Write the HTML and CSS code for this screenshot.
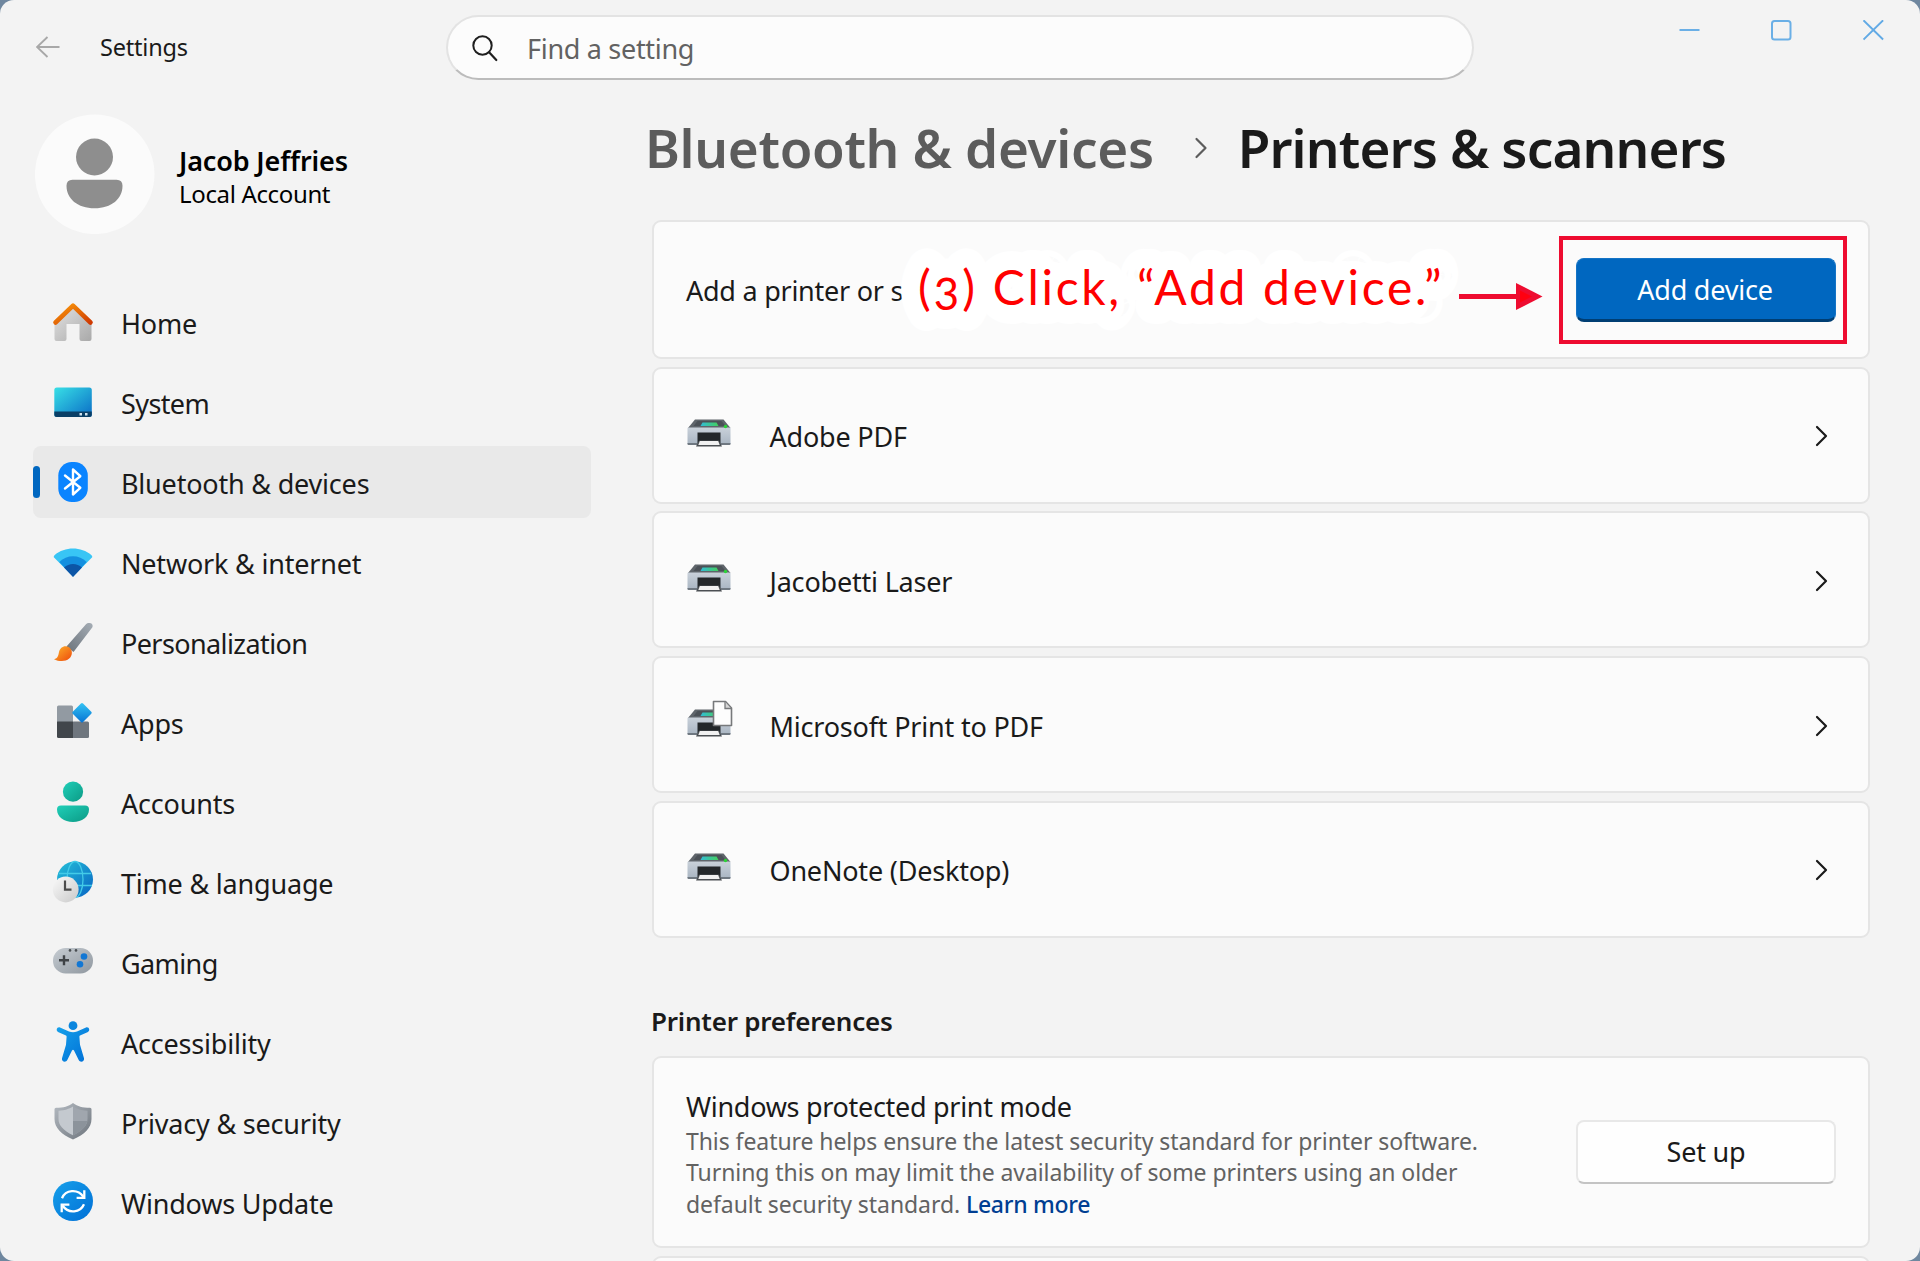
FILE: index.html
```
<!DOCTYPE html>
<html lang="en">
<head>
    <meta charset="UTF-8">
    <meta name="viewport" content="width=device-width, initial-scale=1.0">
    <title>Settings</title>
    <link rel="stylesheet" href="styles.css">
</head>
<body>
    <!-- shared gradients and symbols -->
    <svg class="defs" width="0" height="0">
        <defs>
            <linearGradient id="roof" x1="0" y1="0" x2="1" y2="1"><stop offset="0" stop-color="#fb9a0a"/><stop offset="1" stop-color="#cf3a02"/></linearGradient>
            <linearGradient id="wall" x1="0" y1="0" x2="1" y2="1"><stop offset="0" stop-color="#e2e2e2"/><stop offset="1" stop-color="#a9a9a9"/></linearGradient>
            <linearGradient id="screen" x1="0" y1="0" x2="1" y2="1"><stop offset="0" stop-color="#38e0e6"/><stop offset="1" stop-color="#0a6cc6"/></linearGradient>
            <linearGradient id="handle" x1="1" y1="0" x2="0" y2="1"><stop offset="0" stop-color="#a5adb5"/><stop offset="1" stop-color="#6b737b"/></linearGradient>
            <linearGradient id="bristle" x1="0" y1="0" x2="1" y2="1"><stop offset="0" stop-color="#fdb52a"/><stop offset="1" stop-color="#ee4a0c"/></linearGradient>
            <linearGradient id="diamond" x1="0" y1="0" x2="1" y2="1"><stop offset="0" stop-color="#35c5f4"/><stop offset="1" stop-color="#0672d3"/></linearGradient>
            <linearGradient id="teal" x1="0" y1="0" x2="1" y2="1"><stop offset="0" stop-color="#20cfb8"/><stop offset="1" stop-color="#0b9a85"/></linearGradient>
            <linearGradient id="globe" x1="0" y1="0" x2="1" y2="1"><stop offset="0" stop-color="#25c0d8"/><stop offset="1" stop-color="#0864c4"/></linearGradient>
            <linearGradient id="clock" x1="0" y1="0" x2="1" y2="1"><stop offset="0" stop-color="#fafafa"/><stop offset="1" stop-color="#c9c9c9"/></linearGradient>
            <linearGradient id="pad" x1="0" y1="0" x2="1" y2="1"><stop offset="0" stop-color="#c6ccd2"/><stop offset="1" stop-color="#8f979f"/></linearGradient>
            <linearGradient id="blue" x1="0" y1="0" x2="1" y2="1"><stop offset="0" stop-color="#16a0ea"/><stop offset="1" stop-color="#006fd6"/></linearGradient>
            <linearGradient id="shield" x1="0" y1="0" x2="1" y2="1"><stop offset="0" stop-color="#b4bac1"/><stop offset="1" stop-color="#6e757d"/></linearGradient>
            <linearGradient id="body" x1="0" y1="0" x2="0" y2="1"><stop offset="0" stop-color="#c9d1da"/><stop offset="1" stop-color="#a9b5c2"/></linearGradient>
            <linearGradient id="lcd" x1="0" y1="0" x2="1" y2="0"><stop offset="0" stop-color="#33bcd6"/><stop offset="1" stop-color="#43cf5d"/></linearGradient>
            <symbol id="printer" viewBox="0 0 44 28">
                <path d="M8 .5h28.500l7 8.500H1z" fill="#5f656b"/>
                <path d="M10.500 2h24l4 5H6.500z" fill="#4b5157"/>
                <path d="M15.500 3.500h14l2 3.500h-18z" fill="url(#lcd)"/>
                <rect x=".5" y="8.500" width="43" height="17" rx="1" fill="url(#body)"/>
                <path d="M.5 24h43v1q0 1-1 1h-41q-1 0-1-1z" fill="#6f7881"/>
                <rect x="10.500" y="13.500" width="23" height="10.500" fill="#23272a"/>
                <path d="M12 21.500h20l3 6H9z" fill="#4b4f53"/>
                <path d="M12.800 22h18.400l1.500 4h-21.400z" fill="#f1f1f1"/>
                <circle cx="38.500" cy="7.500" r="1.700" fill="#2bd536"/>
            </symbol>
            <symbol id="chevron" viewBox="0 0 14 22">
                <path d="M2 2l9 9-9 9" fill="none" stroke="currentColor" stroke-width="2.200" stroke-linecap="round" stroke-linejoin="round"/>
            </symbol>
        </defs>
    </svg>

    <div class="window">
        <header class="titlebar">
            <div class="titlebar-left">
                <svg class="back" width="24" height="22" viewBox="0 0 24 22"><path d="M23.500 11H1M11.500 1L1 11l10.500 10" fill="none" stroke="#a8a8a8" stroke-width="1.900"/></svg>
                <span class="app-name">Settings</span>
            </div>
            <div class="search">
                <svg width="28" height="28" viewBox="0 0 28 28"><circle cx="11.500" cy="11.500" r="9.200" fill="none" stroke="#1f1f1f" stroke-width="2"/><path d="M18.100 18.300l7.200 7.700" stroke="#1f1f1f" stroke-width="2.200" stroke-linecap="round"/></svg>
                <span class="search-text">Find a setting</span>
            </div>
            <div class="controls">
                <svg width="21" height="21" viewBox="0 0 21 21"><path d="M.5 10h20" stroke="#6aafe6" stroke-width="2"/></svg>
                <svg width="21" height="21" viewBox="0 0 21 21"><rect x="1" y="1" width="18.500" height="18.500" rx="2.500" fill="none" stroke="#6aafe6" stroke-width="2"/></svg>
                <svg width="21" height="21" viewBox="0 0 21 21"><path d="M.5.300l19.600 19.200M20.100.300L.500 19.500" stroke="#62aae5" stroke-width="1.900"/></svg>
            </div>
        </header>

        <div class="layout">
            <aside class="sidebar">
                <div class="profile">
                    <svg width="120" height="120" viewBox="0 0 120 120">
                        <circle cx="59.700" cy="60.300" r="59.800" fill="#fbfbfb"/>
                        <circle cx="59.500" cy="43" r="18.500" fill="#8e8e8e"/>
                        <path d="M37.500 65.800h44q6 0 6 6c0 13-11 22.500-28 22.500s-28-9.500-28-22.500q0-6 6-6z" fill="#8e8e8e"/>
                    </svg>
                    <div class="profile-text">
                        <div class="profile-name">Jacob Jeffries</div>
                        <div class="profile-type">Local Account</div>
                    </div>
                </div>

                <nav class="nav">
                    <a class="nav-item">
                        <svg class="nav-icon" viewBox="0 0 40 40"><path d="M20 5L1.500 20v17q0 2 2 2h8q2 0 2-2V22h13v15q0 2 2 2h8q2 0 2-2V20z" fill="url(#wall)"/><path d="M2.500 20.500L20 3.700l17.500 16.800" fill="none" stroke="url(#roof)" stroke-width="4.600" stroke-linecap="round" stroke-linejoin="round"/></svg>
                        <span>Home</span>
                    </a>
                    <a class="nav-item">
                        <svg class="nav-icon" viewBox="0 0 40 40"><rect x="1.300" y="5.500" width="37.500" height="29.500" rx="2.500" fill="url(#screen)"/><path d="M1.300 29.500h37.500v3q0 2.500-2.500 2.500H3.800q-2.500 0-2.500-2.500z" fill="#0a3f66"/><rect x="26.500" y="31" width="2.500" height="2.500" fill="#cfe3f0"/><rect x="32" y="31" width="2.500" height="2.500" fill="#cfe3f0"/></svg>
                        <span class="tight">System</span>
                    </a>
                    <a class="nav-item active">
                        <svg class="nav-icon" viewBox="0 0 40 40"><rect x="5.300" width="29.500" height="40" rx="13.500" fill="#0a84ff"/><path d="M12 13.500l15.300 12.300-7.300 6.700v-25l7.300 6.700L12 26.500" fill="none" stroke="#fff" stroke-width="2.400" stroke-linejoin="round" stroke-linecap="round"/></svg>
                        <span>Bluetooth &amp; devices</span>
                    </a>
                    <a class="nav-item">
                        <svg class="nav-icon" viewBox="0 0 40 40"><path d="M20 34.500L.8 15.200Q.5 14 1.500 13.200C12 4.300 28 4.300 38.500 13.200q1 .8.700 2z" fill="#38c5f5"/><path d="M20 34.500L6.300 20C14 12.300 26 12.300 33.700 20z" fill="#148fdf"/><path d="M20 35L11 25.500c5-4.700 13-4.700 18 0z" fill="#0c55a6"/></svg>
                        <span>Network &amp; internet</span>
                    </a>
                    <a class="nav-item">
                        <svg class="nav-icon" viewBox="0 0 40 40"><path d="M13.500 24.500L33 2.200C35-.2 41 .8 39.400 5.200L20.500 30z" fill="url(#handle)"/><path d="M1 37.200c4-1 4.300-3.700 5-7.200 1-5 6-7.500 10-4.700 4.200 3 3.500 8.500.2 11.300C12 40.200 5.500 39.500 1 37.200z" fill="url(#bristle)"/></svg>
                        <span class="tight">Personalization</span>
                    </a>
                    <a class="nav-item">
                        <svg class="nav-icon" viewBox="0 0 40 40"><rect x="4" y="3.500" width="16" height="17" rx="1.500" fill="#929aa2"/><rect x="19" y="19.500" width="17" height="16.500" rx="1.500" fill="#6f767e"/><path d="M4 19.500h16V36H5.500Q4 36 4 34.500z" fill="#41464b"/><rect x="21.700" y="3.500" width="14.600" height="14.600" rx="1.500" transform="rotate(45 29 10.800)" fill="url(#diamond)"/></svg>
                        <span>Apps</span>
                    </a>
                    <a class="nav-item">
                        <svg class="nav-icon" viewBox="0 0 40 40"><circle cx="20" cy="9.700" r="10.100" fill="url(#teal)"/><path d="M8 23.500h24q4 0 4 4C36 35 29 40 20 40S4 35 4 27.500q0-4 4-4z" fill="url(#teal)"/></svg>
                        <span>Accounts</span>
                    </a>
                    <a class="nav-item">
                        <svg class="nav-icon" viewBox="0 0 40 40"><circle cx="22" cy="17.500" r="18" fill="url(#globe)"/><g fill="none" stroke="#43cbe8" stroke-width="1.300"><ellipse cx="22" cy="17.500" rx="8" ry="18"/><path d="M6 11.500h32M5 23.500h34"/></g><circle cx="12.700" cy="27.500" r="12.900" fill="url(#clock)"/><path d="M12 18.500v9.200h6.500" fill="none" stroke="#4c4c4c" stroke-width="2.200"/></svg>
                        <span>Time &amp; language</span>
                    </a>
                    <a class="nav-item">
                        <svg class="nav-icon" viewBox="0 0 40 40"><rect x="0" y="6" width="40" height="25.500" rx="12.500" fill="url(#pad)"/><path d="M11 13.300v10M6 18.300h10" stroke="#3f4347" stroke-width="2.400"/><circle cx="31" cy="14.500" r="3.300" fill="#1277d4"/><circle cx="27" cy="22.300" r="3.300" fill="#1277d4"/><circle cx="17" cy="8.400" r="1.300" fill="#4a4e52"/><circle cx="23" cy="8.400" r="1.300" fill="#4a4e52"/></svg>
                        <span class="tight">Gaming</span>
                    </a>
                    <a class="nav-item">
                        <svg class="nav-icon" viewBox="0 0 40 40"><circle cx="20" cy="3.700" r="4.400" fill="#0b86de"/><path d="M7 5.500l9 4q4 1.500 8 0l9-4c3.300-1 4.300 3.200 2 4.400l-8 3.600q-.7.300-.6 1.200l.6 8 4 13.500c.7 3.500-3.800 4.700-5.300 1.800L21 28.500q-1-1.500-2 0L14.300 38c-1.500 2.900-6 1.700-5.300-1.800l4-13.500.6-8q.100-.9-.6-1.200L5 9.900c-2.300-1.200-1.300-5.400 2-4.400z" fill="url(#blue)"/></svg>
                        <span>Accessibility</span>
                    </a>
                    <a class="nav-item">
                        <svg class="nav-icon" viewBox="0 0 40 40"><path d="M20 1c5 3.500 9 4.800 17 4.800q1.500 0 1.500 1.500V17c0 9-7 15.500-18.500 20.500C8.500 32.500 1.500 26 1.500 17V7.300q0-1.500 1.500-1.500C11 5.800 15 4.500 20 1z" fill="url(#shield)"/><path d="M20 4.500c4.500 2.500 8 3.900 14.500 4.200V17c0 6-4.500 11.500-14.500 16.300z" fill="#a0a6ae"/><path d="M20 4.500c-4.500 2.500-8 3.900-14.500 4.200V17c0 6 4.500 11.500 14.500 16.300z" fill="#c4c9cf"/><path d="M20 19h14.200c-1 5.200-5.500 10-14.200 14.300z" fill="#8c939b"/></svg>
                        <span>Privacy &amp; security</span>
                    </a>
                    <a class="nav-item">
                        <svg class="nav-icon" viewBox="0 0 40 40"><circle cx="20" cy="19" r="20" fill="url(#blue)"/><g fill="none" stroke="#fff" stroke-width="2.300"><path d="M9 16.200c3.500-8.300 15.500-10 21.500-1.200M31 22.300c-3.500 8.300-15.500 10-21.500 1.200"/><path d="M31.300 8.200v7.700h-7.700M8.700 30.300v-7.700h7.700"/></g></svg>
                        <span>Windows Update</span>
                    </a>
                </nav>
            </aside>

            <main class="main">
                <h1 class="breadcrumb">
                    <span class="crumb-parent">Bluetooth &amp; devices</span>
                    <svg class="crumb-chevron" width="15" height="22"><use href="#chevron"/></svg>
                    <span class="crumb-current">Printers &amp; scanners</span>
                </h1>

                <section class="cards">
                    <div class="card add-card">
                        <span class="add-text">Add a printer or s</span>
                        <button class="btn btn-primary">Add device</button>
                        <!-- instruction callout over the card -->
                        <svg class="callout" width="660" height="110" viewBox="0 0 660 110">
                            <text class="callout-text" x="28" y="72">(3) Click, “Add device.”</text>
                            <path d="M569 63.500h58" stroke="#ee0c30" stroke-width="5"/>
                            <path d="M626 50l26.500 13.500L626 77z" fill="#ee0c30"/>
                            <path d="M630 57.500l12 6-12 6z" fill="#ff0010"/>
                        </svg>
                        <div class="highlight"></div>
                    </div>
                    <div class="card">
                        <svg class="printer-icon" width="44" height="28"><use href="#printer"/></svg>
                        <span class="card-label">Adobe PDF</span>
                        <svg class="go" width="14" height="22"><use href="#chevron"/></svg>
                    </div>
                    <div class="card">
                        <svg class="printer-icon" width="44" height="28"><use href="#printer"/></svg>
                        <span class="card-label">Jacobetti Laser</span>
                        <svg class="go" width="14" height="22"><use href="#chevron"/></svg>
                    </div>
                    <div class="card">
                        <svg class="printer-icon" width="44" height="28"><use href="#printer"/><path d="M26.500-7.500h12l6 6.500v17.500h-18z" fill="#fdfdfd" stroke="#77797b" stroke-width="1.600" stroke-linejoin="round"/><path d="M38-7v6.500h6" fill="#d5d5d5" stroke="#77797b" stroke-width="1.300"/></svg>
                        <span class="card-label">Microsoft Print to PDF</span>
                        <svg class="go" width="14" height="22"><use href="#chevron"/></svg>
                    </div>
                    <div class="card">
                        <svg class="printer-icon" width="44" height="28"><use href="#printer"/></svg>
                        <span class="card-label">OneNote (Desktop)</span>
                        <svg class="go" width="14" height="22"><use href="#chevron"/></svg>
                    </div>
                </section>

                <h2 class="section-title">Printer preferences</h2>
                <section class="prefs">
                    <div class="card pref-card">
                        <div class="pref-text">
                            <div class="pref-title">Windows protected print mode</div>
                            <p class="pref-desc">This feature helps ensure the latest security standard for printer software.<br>Turning this on may limit the availability of some printers using an older<br>default security standard. <a class="link">Learn more</a></p>
                        </div>
                        <button class="btn btn-default">Set up</button>
                    </div>
                    <div class="card"></div>
                </section>
            </main>
        </div>
    </div>
</body>
</html>
```
FILE: styles.css
```
* {
    margin: 0;
    padding: 0;
    box-sizing: border-box;
}

body {
    font-family: 'Noto Sans', 'Open Sans', sans-serif;
    font-size: 27px;
    background: #6f879f;
    color: #1a1a1a;
    width: 1920px;
    height: 1261px;
    overflow: hidden;
}

svg {
    display: block;
    flex: none;
}

.defs {
    position: absolute;
}

.window {
    width: 1920px;
    height: 1261px;
    background: #f3f3f3;
    border-radius: 14px;
    overflow: hidden;
}

/* title bar */
.titlebar {
    display: grid;
    grid-template-columns: 446px 1028px 1fr;
    height: 94px;
}

.titlebar-left {
    display: flex;
    align-items: center;
    gap: 40px;
    padding-left: 36px;
}

.app-name {
    font-size: 23.5px;
    letter-spacing: -0.2px;
}

.search {
    display: flex;
    align-items: center;
    gap: 28px;
    height: 65px;
    margin-top: 15px;
    padding-left: 23px;
    background: #fcfcfc;
    border: 2px solid #e3e3e3;
    border-bottom-color: #bcbcbc;
    border-radius: 33px;
}

.search-text {
    color: #626262;
    letter-spacing: -0.3px;
    padding-top: 2px;
}

.controls {
    display: flex;
    justify-content: flex-end;
    gap: 71px;
    padding: 20px 36.5px 0 0;
}

.layout {
    display: flex;
    height: 1167px;
}

/* sidebar */
.sidebar {
    width: 591px;
    padding: 20px 0 0 33px;
    flex: none;
}

.profile {
    display: flex;
    align-items: center;
    gap: 24px;
    padding-left: 2px;
    margin-bottom: 52px;
}

.profile-text {
    padding-top: 5px;
    line-height: 33px;
    color: #000;
}

.profile-name {
    font-size: 27px;
    font-weight: 600;
    letter-spacing: -0.15px;
}

.profile-type {
    font-size: 24px;
    letter-spacing: -0.35px;
}

.nav {
    display: flex;
    flex-direction: column;
    gap: 8px;
}

.nav-item {
    position: relative;
    display: flex;
    align-items: center;
    gap: 28px;
    height: 72px;
    padding-left: 20px;
    border-radius: 8px;
    letter-spacing: -0.2px;
}

.nav-item span {
    padding-top: 3px;
}

.nav-item .tight {
    letter-spacing: -0.6px;
}

.nav-icon {
    width: 40px;
    height: 40px;
    overflow: visible;
}

.nav-item.active {
    background: #e9e9e9;
}

.nav-item.active::before {
    content: '';
    position: absolute;
    left: 0;
    top: 20px;
    width: 7px;
    height: 32px;
    border-radius: 4px;
    background: #0067c0;
}

/* main column */
.main {
    width: 1218px;
    margin-left: 61px;
    padding-top: 16px;
}

.breadcrumb {
    display: flex;
    align-items: center;
    height: 74px;
    margin: 0 0 36px -7px;
    font-size: 53px;
    font-weight: 600;
    white-space: nowrap;
}

.crumb-parent {
    color: #5c5c5c;
    letter-spacing: -0.32px;
}

.crumb-chevron {
    margin: 2px 29px 0 40px;
    color: #5c5c5c;
}

.crumb-current {
    letter-spacing: -0.85px;
}

.cards {
    display: flex;
    flex-direction: column;
    gap: 7.5px;
}

.card {
    position: relative;
    display: flex;
    align-items: center;
    height: 137.2px;
    padding: 0 32px;
    background: #fbfbfb;
    border: 2px solid #e5e5e5;
    border-radius: 9px;
    letter-spacing: -0.2px;
}

.add-card {
    height: 139.1px;
    justify-content: space-between;
}

.add-text {
    padding-top: 2px;
    letter-spacing: -0.25px;
}

.printer-icon {
    overflow: visible;
    margin: 0 0 4px 1px;
}

.card-label {
    flex: 1;
    margin-left: 38.5px;
    padding-top: 3px;
}

.go {
    margin: 2px 7px 0 0;
}

.btn {
    width: 260px;
    height: 64px;
    flex: none;
    border-radius: 8px;
    font-family: inherit;
    font-size: 27px;
    letter-spacing: -0.2px;
}

.btn-primary {
    padding: 2px 2px 0 0;
    background: #0067c0;
    border: 1px solid #1473c5;
    border-bottom: 3px solid #003e73;
    color: #fff;
}

.btn-default {
    background: #fefefe;
    border: 2px solid #e8e8e8;
    border-bottom-color: #c4c4c4;
    color: #1a1a1a;
}

.callout {
    position: absolute;
    left: 236px;
    top: 11px;
    overflow: visible;
}

.callout-text {
    font-family: Lato, sans-serif;
    font-size: 48px;
    font-feature-settings: "onum";
    letter-spacing: 2.7px;
    fill: #f00;
    stroke: #fff;
    stroke-width: 38px;
    stroke-linejoin: round;
    paint-order: stroke;
}

.highlight {
    position: absolute;
    left: 905px;
    top: 14px;
    width: 288px;
    height: 108px;
    border: 4px solid #ee0c30;
}

.section-title {
    margin: 65px 0 17px -1px;
    font-size: 26px;
    line-height: 36px;
    font-weight: 600;
    letter-spacing: -0.22px;
}

.prefs {
    display: flex;
    flex-direction: column;
    gap: 8px;
}

.pref-card {
    height: 192px;
    justify-content: space-between;
    flex: none;
}

.pref-text {
    padding-top: 6px;
}

.pref-title {
    line-height: 34px;
    letter-spacing: -0.3px;
}

.pref-desc {
    margin-top: 2px;
    font-size: 23px;
    line-height: 31.5px;
    letter-spacing: -0.07px;
    color: #626262;
    white-space: nowrap;
}

.link {
    color: #003e92;
    font-weight: 500;
    letter-spacing: -0.3px;
}
```
